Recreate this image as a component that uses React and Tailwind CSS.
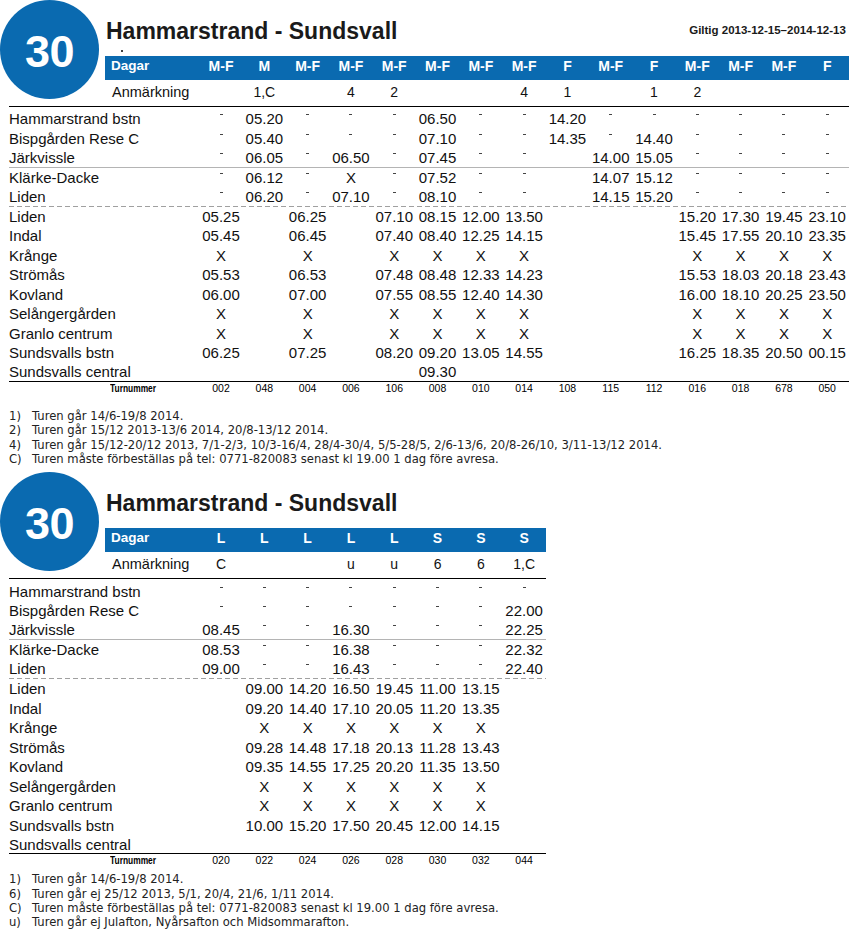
import React from "react";

const W1 = "w-[43.3px]";

const block1 = {
  days: ["M-F", "M", "M-F", "M-F", "M-F", "M-F", "M-F", "M-F", "F", "M-F", "F", "M-F", "M-F", "M-F", "F"],
  notes: ["", "1,C", "", "4", "2", "", "", "4", "1", "", "1", "2", "", "", ""],
  rows: [
    { name: "Hammarstrand bstn", cells: ["-", "05.20", "-", "-", "-", "06.50", "-", "-", "14.20", "-", "-", "-", "-", "-", "-"] },
    { name: "Bispgården Rese C", cells: ["-", "05.40", "-", "-", "-", "07.10", "-", "-", "14.35", "-", "14.40", "-", "-", "-", "-"] },
    { name: "Järkvissle", cells: ["-", "06.05", "-", "06.50", "-", "07.45", "-", "-", "", "14.00", "15.05", "-", "-", "-", "-"], line: "gray" },
    { name: "Klärke-Dacke", cells: ["-", "06.12", "-", "X", "-", "07.52", "-", "-", "", "14.07", "15.12", "-", "-", "-", "-"] },
    { name: "Liden", cells: ["-", "06.20", "-", "07.10", "-", "08.10", "-", "-", "", "14.15", "15.20", "-", "-", "-", "-"], line: "dashed" },
    { name: "Liden", cells: ["05.25", "", "06.25", "", "07.10", "08.15", "12.00", "13.50", "", "", "", "15.20", "17.30", "19.45", "23.10"] },
    { name: "Indal", cells: ["05.45", "", "06.45", "", "07.40", "08.40", "12.25", "14.15", "", "", "", "15.45", "17.55", "20.10", "23.35"] },
    { name: "Krånge", cells: ["X", "", "X", "", "X", "X", "X", "X", "", "", "", "X", "X", "X", "X"] },
    { name: "Strömås", cells: ["05.53", "", "06.53", "", "07.48", "08.48", "12.33", "14.23", "", "", "", "15.53", "18.03", "20.18", "23.43"] },
    { name: "Kovland", cells: ["06.00", "", "07.00", "", "07.55", "08.55", "12.40", "14.30", "", "", "", "16.00", "18.10", "20.25", "23.50"] },
    { name: "Selångergården", cells: ["X", "", "X", "", "X", "X", "X", "X", "", "", "", "X", "X", "X", "X"] },
    { name: "Granlo centrum", cells: ["X", "", "X", "", "X", "X", "X", "X", "", "", "", "X", "X", "X", "X"] },
    { name: "Sundsvalls bstn", cells: ["06.25", "", "07.25", "", "08.20", "09.20", "13.05", "14.55", "", "", "", "16.25", "18.35", "20.50", "00.15"] },
    { name: "Sundsvalls central", cells: ["", "", "", "", "", "09.30", "", "", "", "", "", "", "", "", ""], line: "black" },
  ],
  turns: ["002", "048", "004", "006", "106", "008", "010", "014", "108", "115", "112", "016", "018", "678", "050"],
  footnotes: [
    ["1)", "Turen går 14/6-19/8 2014."],
    ["2)", "Turen går 15/12 2013-13/6 2014, 20/8-13/12 2014."],
    ["4)", "Turen går 15/12-20/12 2013, 7/1-2/3, 10/3-16/4, 28/4-30/4, 5/5-28/5, 2/6-13/6, 20/8-26/10, 3/11-13/12 2014."],
    ["C)", "Turen måste förbeställas på tel: 0771-820083 senast kl 19.00 1 dag före avresa."],
  ],
};

const block2 = {
  days: ["L", "L", "L", "L", "L", "S", "S", "S"],
  notes: ["C", "", "", "u", "u", "6", "6", "1,C"],
  rows: [
    { name: "Hammarstrand bstn", cells: ["-", "-", "-", "-", "-", "-", "-", "-"] },
    { name: "Bispgården Rese C", cells: ["-", "-", "-", "-", "-", "-", "-", "22.00"] },
    { name: "Järkvissle", cells: ["08.45", "-", "-", "16.30", "-", "-", "-", "22.25"], line: "gray" },
    { name: "Klärke-Dacke", cells: ["08.53", "-", "-", "16.38", "-", "-", "-", "22.32"] },
    { name: "Liden", cells: ["09.00", "-", "-", "16.43", "-", "-", "-", "22.40"], line: "dashed" },
    { name: "Liden", cells: ["", "09.00", "14.20", "16.50", "19.45", "11.00", "13.15", ""] },
    { name: "Indal", cells: ["", "09.20", "14.40", "17.10", "20.05", "11.20", "13.35", ""] },
    { name: "Krånge", cells: ["", "X", "X", "X", "X", "X", "X", ""] },
    { name: "Strömås", cells: ["", "09.28", "14.48", "17.18", "20.13", "11.28", "13.43", ""] },
    { name: "Kovland", cells: ["", "09.35", "14.55", "17.25", "20.20", "11.35", "13.50", ""] },
    { name: "Selångergården", cells: ["", "X", "X", "X", "X", "X", "X", ""] },
    { name: "Granlo centrum", cells: ["", "X", "X", "X", "X", "X", "X", ""] },
    { name: "Sundsvalls bstn", cells: ["", "10.00", "15.20", "17.50", "20.45", "12.00", "14.15", ""] },
    { name: "Sundsvalls central", cells: ["", "", "", "", "", "", "", ""], line: "black" },
  ],
  turns: ["020", "022", "024", "026", "028", "030", "032", "044"],
  footnotes: [
    ["1)", "Turen går 14/6-19/8 2014."],
    ["6)", "Turen går ej 25/12 2013, 5/1, 20/4, 21/6, 1/11 2014."],
    ["C)", "Turen måste förbeställas på tel: 0771-820083 senast kl 19.00 1 dag före avresa."],
    ["u)", "Turen går ej Julafton, Nyårsafton och Midsommarafton."],
  ],
};

function Cell({ v }) {
  if (v === "-") {
    return (
      <div className={`${W1} flex justify-center`}>
        <span className="block w-[3px] h-px bg-[#444] -translate-y-[4px]" />
      </div>
    );
  }
  return <div className={`${W1} text-center`}>{v}</div>;
}

function Row({ name, cells, line }) {
  let cls = "h-[19.5px]";
  if (line === "gray") cls = "h-[19.5px] border-b border-[#b4b4b4]";
  if (line === "black") cls = "h-[19.5px] border-b-[1.5px] border-black";
  if (line === "dashed") cls = "h-[18.5px]";
  return (
    <>
      <div className={`flex items-center leading-none ${cls}`}>
        <div className="w-[190.4px] shrink-0">{name}</div>
        {cells.map((c, i) => (
          <Cell key={i} v={c} />
        ))}
      </div>
      {line === "dashed" && (
        <div className="h-px bg-[repeating-linear-gradient(90deg,#a0a0a0_0_5px,transparent_5px_8px)]" />
      )}
    </>
  );
}

function Timetable({ data, giltig, dot, fnTop, fnBottom }) {
  return (
    <div className={`${fnBottom}`}>
      {/* header */}
      <div className="flex">
        <div className="w-[99px] h-[99px] shrink-0 rounded-full bg-[#0a6ab0] flex items-center justify-center">
          <span className="text-white font-bold text-[45px] leading-none mt-[4px] tracking-[-0.5px]">30</span>
        </div>
        <div className="ml-[6px] relative">
          <div className="h-[56px] flex justify-between items-start">
            <h1 className="mt-[20px] ml-[1px] text-[23px] leading-none font-bold text-[#1a1a1a]">
              Hammarstrand - Sundsvall
            </h1>
            {giltig && (
              <div className="mt-[25px] mr-[3px] text-[11.5px] leading-none font-bold text-[#1a1a1a]">
                Giltig 2013-12-15–2014-12-13
              </div>
            )}
          </div>
          {dot && <span className="absolute left-[16px] top-[50px] w-[1.5px] h-[1.5px] rounded-full bg-black" />}
          <div className="h-[24px] pb-[5px] flex items-center bg-[#0a6ab0] text-white font-bold text-[14px] leading-none">
            <div className="w-[94.4px] pl-[6px] text-[13.5px]">Dagar</div>
            {data.days.map((d, i) => (
              <div key={i} className={`${W1} text-center`}>
                {d}
              </div>
            ))}
          </div>
          <div className="h-[26px] pb-[2px] flex items-center text-[14px] leading-none text-[#111]">
            <div className="w-[94.4px] pl-[7px] text-[14.5px]">Anmärkning</div>
            {data.notes.map((n, i) => (
              <div key={i} className={`${W1} text-center`}>
                {n}
              </div>
            ))}
          </div>
        </div>
      </div>

      {/* body */}
      <div className="ml-[9px] w-fit border-t-[1.5px] border-black pt-[2px] text-[15px] text-[#111]">
        {data.rows.map((r, i) => (
          <Row key={i} {...r} />
        ))}
        <div className="h-[12.5px] flex items-center leading-none text-[10.5px] text-black">
          <div className="w-[190.4px] shrink-0 pl-[101px]">
            <span className="inline-block origin-left scale-x-[0.8] font-bold text-[10.5px]">Turnummer</span>
          </div>
          {data.turns.map((t, i) => (
            <div key={i} className={`${W1} text-center`}>
              {t}
            </div>
          ))}
        </div>
      </div>

      {/* footnotes */}
      <div className={`ml-[9px] ${fnTop} font-['DejaVu_Sans',sans-serif] text-[11.6px] leading-[14.3px] text-[#222]`}>
        {data.footnotes.map(([k, t], i) => (
          <div key={i} className="flex">
            <div className="w-[23px] shrink-0">{k}</div>
            <div>{t}</div>
          </div>
        ))}
      </div>
    </div>
  );
}

export default function App() {
  return (
    <div className="w-[864px] h-[939px] overflow-hidden bg-white font-['Liberation_Sans',Arial,sans-serif]">
      <Timetable data={block1} giltig dot fnTop="mt-[14.5px]" fnBottom="pb-[6.25px]" />
      <Timetable data={block2} fnTop="mt-[5.35px]" fnBottom="" />
    </div>
  );
}
